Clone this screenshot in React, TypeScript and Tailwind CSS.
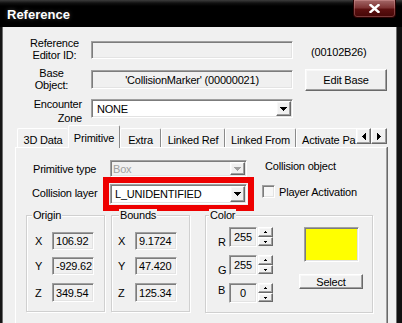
import React from "react";

const sunken =
  "border border-t-[#a0a0a0] border-l-[#a0a0a0] border-r-white border-b-white shadow-[inset_1px_1px_0_#7c7c7c,inset_-1px_-1px_0_#e3e3e3]";
const raised =
  "bg-[#f0f0f0] border border-t-white border-l-white border-r-[#696969] border-b-[#696969] shadow-[inset_-1px_-1px_0_#a0a0a0,inset_1px_1px_0_#f8f8f8]";

function DownTri({ color = "#000" }: { color?: string }) {
  return (
    <svg width="7" height="4" viewBox="0 0 7 4" shapeRendering="crispEdges">
      <path d="M0 0h7v1H0zM1 1h5v1H1zM2 2h3v1H2zM3 3h1v1H3z" fill={color} />
    </svg>
  );
}

function LeftTri() {
  return (
    <svg width="4" height="7" viewBox="0 0 4 7" shapeRendering="crispEdges">
      <path d="M3 0h1v7H3zM2 1h1v5H2zM1 2h1v3H1zM0 3h1v1H0z" fill="#000" />
    </svg>
  );
}

function RightTri() {
  return (
    <svg width="4" height="7" viewBox="0 0 4 7" shapeRendering="crispEdges">
      <path d="M0 0h1v7H0zM1 1h1v5H1zM2 2h1v3H2zM3 3h1v1H3z" fill="#000" />
    </svg>
  );
}

function TinyUp() {
  return (
    <svg width="3" height="2" viewBox="0 0 3 2" shapeRendering="crispEdges">
      <path d="M1 0h1v1H1zM0 1h3v1H0z" fill="#000" />
    </svg>
  );
}

function TinyDown() {
  return (
    <svg width="3" height="2" viewBox="0 0 3 2" shapeRendering="crispEdges">
      <path d="M0 0h3v1H0zM1 1h1v1H1z" fill="#000" />
    </svg>
  );
}

function Combo({
  className,
  text,
  disabled,
  textClass,
}: {
  className: string;
  text: string;
  disabled?: boolean;
  textClass: string;
}) {
  return (
    <div
      className={`${sunken} ${disabled ? "bg-[#f0f0f0]" : "bg-white"} flex items-stretch justify-between p-[1px] ${className}`}
    >
      <span className={`flex items-center whitespace-nowrap ${disabled ? "text-[#a0a0a0]" : "text-black"} ${textClass}`}>
        {text}
      </span>
      <div className={`${raised} w-[15px] flex items-center justify-center`}>
        <DownTri color={disabled ? "#a0a0a0" : "#000"} />
      </div>
    </div>
  );
}

function Tab({
  label,
  className,
  selected,
  noRight,
}: {
  label: string;
  className: string;
  selected?: boolean;
  noRight?: boolean;
}) {
  return (
    <div
      className={`shrink-0 bg-[#f0f0f0] border-t border-l border-t-white border-l-white rounded-tl-[2px] rounded-tr-[2px] whitespace-nowrap ${
        noRight ? "" : "border-r border-r-[#8a8a8a]"
      } ${selected ? "h-[23px] pt-[6px] relative z-10" : "mt-[3px] h-[19px] pt-[5px]"} ${className}`}
    >
      {label}
    </div>
  );
}

function Group({
  label,
  labelClass,
  className,
  children,
}: {
  label: string;
  labelClass: string;
  className: string;
  children: React.ReactNode;
}) {
  return (
    <div
      className={`relative shrink-0 border border-[#d0d0d0] shadow-[inset_1px_1px_0_#ffffff,1px_1px_0_#ffffff] ${className}`}
    >
      <div className={`absolute -top-[7px] px-[1px] bg-[#f0f0f0] leading-[12px] ${labelClass}`}>{label}</div>
      {children}
    </div>
  );
}

function CoordRow({
  axis,
  value,
  rowClass,
  labelClass,
}: {
  axis: string;
  value: string;
  rowClass: string;
  labelClass: string;
}) {
  return (
    <div className={`flex items-center ${rowClass}`}>
      <div className={labelClass}>{axis}</div>
      <div className={`${sunken} bg-[#f0f0f0] w-[42px] h-full flex items-center pl-[3px] whitespace-nowrap`}>{value}</div>
    </div>
  );
}

function ColorRow({ ch, value, labelMt }: { ch: string; value: string; labelMt: string }) {
  return (
    <div className="flex items-start h-[20px]">
      <div className={`w-[23px] pl-[12px] ${labelMt}`}>{ch}</div>
      <div className={`${sunken} bg-[#f0f0f0] w-[28px] h-[20px] flex items-center justify-center pb-[1px]`}>{value}</div>
      <div className="ml-[1px] w-[15px] h-[19px] flex flex-col">
        <div className={`${raised} h-[10px] flex items-center justify-center`}>
          <TinyUp />
        </div>
        <div className={`${raised} h-[9px] flex items-center justify-center`}>
          <TinyDown />
        </div>
      </div>
    </div>
  );
}

function TitleBar() {
  return (
    <div className="h-[27px] shrink-0 flex justify-between items-start bg-[linear-gradient(to_bottom,#3c3c3c_0px,#111111_3px,#000000_6px)]">
      <div className="pl-[7px] pt-[7px] text-[13px] leading-[16px] font-bold text-white tracking-normal [text-shadow:0_0_4px_rgba(255,255,255,0.25)]">
        Reference
      </div>
      <div className="mr-[6px] w-[43px] h-[18px] rounded-bl-[4px] rounded-br-[4px] border border-t-0 border-[#2a0303] bg-[linear-gradient(to_bottom,#a46868_0%,#7e3434_45%,#5c1010_55%,#450707_100%)] shadow-[inset_0_0_0_1px_rgba(255,190,190,0.28)] flex items-center justify-center">
        <svg width="11" height="9" viewBox="0 0 11 9">
          <path d="M1.5 1 L9.5 8 M9.5 1 L1.5 8" stroke="#ffffff" strokeWidth="2.4" strokeLinecap="square" />
        </svg>
      </div>
    </div>
  );
}

export default function App() {
  return (
    <div className="w-[402px] h-[323px] overflow-hidden flex flex-col bg-black font-['Liberation_Sans',Arial,sans-serif] text-[11px] leading-[12px] tracking-[-0.2px] text-black">
      <TitleBar />
      <div className="flex flex-1 min-h-0">
        <div className="w-[3px] shrink-0 bg-[#161616] border-r border-r-[#6e6e6e]" />
        <div className="w-[393px] shrink-0 bg-[#f0f0f0] flex flex-col overflow-hidden">
          {/* Row 1 */}
          <div className="flex items-start mt-[10px]">
            <div className="w-[88px] shrink-0 pl-[15px] text-center">
              Reference
              <br />
              Editor ID:
            </div>
            <div className={`${sunken} bg-[#f0f0f0] w-[202px] h-[18px] mt-[4px] shrink-0`} />
            <div className="ml-[18px] mt-[9px] whitespace-nowrap">(00102B26)</div>
          </div>
          {/* Row 2 */}
          <div className="flex items-start mt-[6px]">
            <div className="w-[88px] shrink-0 pl-[9px] text-center">
              Base
              <br />
              Object:
            </div>
            <div
              className={`${sunken} bg-[#f0f0f0] w-[202px] h-[19px] mt-[3px] shrink-0 flex items-center justify-center whitespace-nowrap`}
            >
              'CollisionMarker' (00000021)
            </div>
            <div className={`${raised} ml-[12px] mt-[2px] w-[82px] h-[22px] shrink-0 flex items-center justify-center`}>
              Edit Base
            </div>
          </div>
          {/* Row 3 */}
          <div className="flex items-start mt-[6px]">
            <div className="w-[88px] shrink-0 pr-[9px] text-right leading-[14px]">
              Encounter
              <br />
              Zone
            </div>
            <Combo className="w-[202px] h-[19px] mt-[2px] shrink-0" text="NONE" textClass="pl-[4px]" />
          </div>
          {/* Tabs strip */}
          <div className="ml-[12px] w-[372px] h-[23px] -mb-[1px] relative z-10 flex items-start shrink-0">
            <div className="ml-[2px] w-[339px] h-[23px] overflow-hidden flex items-start">
              <Tab label="3D Data" className="w-[51px] text-center" noRight />
              <Tab label="Primitive" className="w-[52px] text-center" selected />
              <Tab label="Extra" className="w-[41px] text-center" />
              <Tab label="Linked Ref" className="w-[64px] text-center" />
              <Tab label="Linked From" className="w-[71px] text-center" />
              <Tab label="Activate Pa" className="w-[80px] pl-[5px]" />
            </div>
            <div className="mt-[3px] flex">
              <div className={`${raised} w-[15px] h-[16px] flex items-center justify-center`}>
                <LeftTri />
              </div>
              <div className={`${raised} w-[16px] h-[16px] flex items-center justify-center`}>
                <RightTri />
              </div>
            </div>
          </div>
          {/* Panel */}
          <div className="ml-[12px] w-[372px] h-[200px] shrink-0 bg-[#f0f0f0] border-l border-t border-r border-l-white border-t-white border-r-[#a0a0a0] shadow-[1px_0_0_#696969] flex flex-col">
            {/* Row A */}
            <div className="flex items-start mt-[12px]">
              <div className="w-[94px] shrink-0 pl-[17px] h-[17px] flex items-center whitespace-nowrap">Primitive type</div>
              <Combo className="w-[137px] h-[17px] shrink-0" text="Box" disabled textClass="pl-[1px]" />
              <div className="ml-[18px] whitespace-nowrap">Collision object</div>
            </div>
            {/* Row B */}
            <div className="flex items-start">
              <div className="w-[87px] shrink-0 pl-[16px] mt-[10px] whitespace-nowrap">Collision layer</div>
              <div className="w-[151px] h-[34px] shrink-0 border-[6px] border-[#ee0000] p-[1px]">
                <Combo className="w-[137px] h-[20px]" text="L_UNIDENTIFIED" textClass="pl-[3px]" />
              </div>
              <div className={`${sunken} bg-[#f7f7f7] ml-[8px] mt-[8px] w-[13px] h-[13px] shrink-0`} />
              <div className="ml-[4px] mt-[9px] whitespace-nowrap">Player Activation</div>
            </div>
            {/* Row C */}
            <div className="flex items-start mt-[4px]">
              <Group label="Origin" labelClass="left-[5px]" className="ml-[10px] w-[79px] h-[97px]">
                <div className="flex flex-col pt-[16px] gap-[7px]">
                  <CoordRow axis="X" value="106.92" rowClass="h-[18px]" labelClass="w-[25px] pl-[8px]" />
                  <CoordRow axis="Y" value="-929.62" rowClass="h-[18px]" labelClass="w-[25px] pl-[8px]" />
                  <CoordRow axis="Z" value="349.54" rowClass="h-[19px] mt-[1px]" labelClass="w-[25px] pl-[8px]" />
                </div>
              </Group>
              <Group label="Bounds" labelClass="left-[7px]" className="ml-[6px] w-[79px] h-[97px]">
                <div className="flex flex-col pt-[16px] gap-[7px]">
                  <CoordRow axis="X" value="9.1724" rowClass="h-[18px]" labelClass="w-[23px] pl-[6px]" />
                  <CoordRow axis="Y" value="47.420" rowClass="h-[18px]" labelClass="w-[23px] pl-[6px]" />
                  <CoordRow axis="Z" value="125.34" rowClass="h-[19px] mt-[1px]" labelClass="w-[23px] pl-[6px]" />
                </div>
              </Group>
              <Group label="Color" labelClass="left-[3px]" className="ml-[15px] w-[168px] h-[98px]">
                <div className="flex items-start">
                  <div className="flex flex-col pt-[11px] gap-[8px]">
                    <ColorRow ch="R" value="255" labelMt="mt-[9px]" />
                    <ColorRow ch="G" value="255" labelMt="mt-[9px]" />
                    <ColorRow ch="B" value="0" labelMt="mt-[1px]" />
                  </div>
                  <div className="ml-[26px] w-[64px] flex flex-col items-center">
                    <div className={`${sunken} mt-[11px] w-[55px] h-[35px] bg-[#ffff00]`} />
                    <div className={`${raised} mt-[12px] w-[64px] h-[15px] flex items-center justify-center`}>Select</div>
                  </div>
                </div>
              </Group>
            </div>
          </div>
        </div>
        <div className="w-[6px] shrink-0 bg-[#101010] border-l border-l-[#6e6e6e]" />
      </div>
    </div>
  );
}
